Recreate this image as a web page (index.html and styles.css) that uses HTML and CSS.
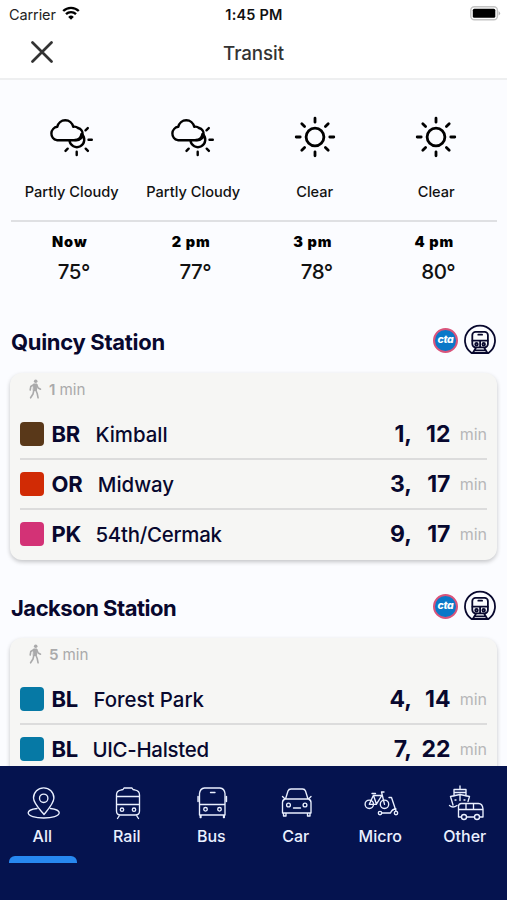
FILE: index.html
```html
<!DOCTYPE html>
<html lang="en">
<head>
<meta charset="utf-8">
<title>Transit</title>
<link rel="stylesheet" href="styles.css">
</head>
<body>
<svg class="defs" aria-hidden="true">
  <symbol id="partly" viewBox="0 0 44 40">
    <path d="M7.800 23.200H27.500a6.200 6.200 0 0 0 1.500-12.200a5.500 5.500 0 0 0-4.800-1.200a8.100 8.100 0 0 0-15.900 0A6.800 6.800 0 0 0 7.800 23.200z"/>
    <path d="M20.500 23.500a7.400 7.400 0 1 0 12-6.500M26 23q5.500 0 6.500-6M36.500 13.300l2.300-2.200M39.500 22.700h3.300M36.700 31.700l2.200 2.200M27.700 34.800v3.200M18.700 31.700l-2.200 2.200"/>
  </symbol>
  <symbol id="sun" viewBox="0 0 44 44">
    <circle cx="22" cy="22" r="8.900"/>
    <path d="M22 3.200v4M22 36.800v4M3.200 22h4M36.800 22h4M8.800 8.800l2.800 2.800M32.400 32.400l2.800 2.800M35.200 8.800l-2.800 2.800M11.600 32.400l-2.800 2.800"/>
  </symbol>
  <symbol id="walk" viewBox="0 0 14 20">
    <circle cx="7.700" cy="2.200" r="1.800" fill="currentColor" stroke="none"/>
    <path d="M6 5h3l-.5 6.500h-3z" fill="currentColor" stroke-width="1"/>
    <path d="M6 5.500L2.800 7.500 2.200 11M8.800 6l1.400 3 2.300 1.200M5.800 11.500L5 15l-2.400 3.800M8 11.500l1.200 3 .9 4.300"/>
  </symbol>
  <symbol id="train" viewBox="0 0 32 32">
    <path d="M7.500 29A15 15 0 1 1 24.500 29z"/>
    <rect x="8.300" y="7.800" width="15.600" height="15.600" rx="3.300"/>
    <path d="M8.500 16.700h15.200M14.300 10.700h3.800M16.100 17v6M11.800 24l-2.700 4.500M20.400 24l2.700 4.500M10.500 26.300h11"/>
    <circle cx="12.500" cy="20.200" r="1.300"/><circle cx="19.700" cy="20.200" r="1.300"/>
  </symbol>
</svg>
<div class="status">
  <span class="carrier">Carrier</span>
  <svg class="wifi" viewBox="0 0 18 14"><path d="M1.200 5a11.200 11.200 0 0 1 15.600 0M4 8.100a7.200 7.200 0 0 1 10 0"/><path class="dot" d="M9 13.700L6.200 10.900a4 4 0 0 1 5.600 0z"/></svg>
  <span class="clock">1:45 PM</span>
  <svg class="battery" viewBox="0 0 31 15"><rect x=".8" y=".8" width="26.600" height="13" rx="3.500" fill="#fff" stroke="#c4c4c4" stroke-width="1.400"/><rect x="2.800" y="2.800" width="22.500" height="9" rx="1.500"/><path d="M28.600 5q3 2.300 0 4.600z" fill="#b5b5b5"/></svg>
</div>
<header class="bar">
  <svg class="close" viewBox="0 0 22 22"><path d="M1.500 1.500L20.500 20.500M20.500 1.500L1.500 20.500"/></svg>
  <h1>Transit</h1>
</header>
<main>
  <section class="weather">
    <div class="sky">
      <div><svg class="wi cloud"><use href="#partly"/></svg><span>Partly Cloudy</span></div>
      <div><svg class="wi cloud"><use href="#partly"/></svg><span>Partly Cloudy</span></div>
      <div><svg class="wi"><use href="#sun"/></svg><span>Clear</span></div>
      <div><svg class="wi"><use href="#sun"/></svg><span>Clear</span></div>
    </div>
    <div class="hours">
      <div><b>Now</b><span>75°</span></div>
      <div><b>2 pm</b><span>77°</span></div>
      <div><b>3 pm</b><span>78°</span></div>
      <div><b>4 pm</b><span>80°</span></div>
    </div>
  </section>
  <section class="station">
    <div class="head"><h2>Quincy Station</h2><span class="cta">cta</span><svg class="train"><use href="#train"/></svg></div>
    <div class="card">
      <div class="walk"><svg><use href="#walk"/></svg><b>1</b><span>min</span></div>
      <div class="row"><i class="sw brown"></i><b class="code">BR</b><span class="dest">Kimball</span><b class="time first">1,</b><b class="time">12</b><span class="min">min</span></div>
      <div class="row"><i class="sw orange"></i><b class="code">OR</b><span class="dest">Midway</span><b class="time first">3,</b><b class="time">17</b><span class="min">min</span></div>
      <div class="row"><i class="sw pink"></i><b class="code">PK</b><span class="dest long">54th/Cermak</span><b class="time first">9,</b><b class="time">17</b><span class="min">min</span></div>
    </div>
  </section>
  <section class="station">
    <div class="head"><h2 class="narrow">Jackson Station</h2><span class="cta">cta</span><svg class="train"><use href="#train"/></svg></div>
    <div class="card">
      <div class="walk"><svg><use href="#walk"/></svg><b>5</b><span>min</span></div>
      <div class="row"><i class="sw blue"></i><b class="code">BL</b><span class="dest">Forest Park</span><b class="time first">4,</b><b class="time">14</b><span class="min">min</span></div>
      <div class="row"><i class="sw blue"></i><b class="code">BL</b><span class="dest long">UIC-Halsted</span><b class="time first">7,</b><b class="time">22</b><span class="min">min</span></div>
    </div>
  </section>
</main>
<nav>
  <a class="on"><svg viewBox="0 0 36 36"><path d="M19 28.500C14 22.500 8.500 17 8.500 12a10.200 10.200 0 0 1 20.400 0c0 5-5 10.500-9.900 16.500z"/><circle cx="18.700" cy="12.300" r="4.200"/><path d="M12 22.500c-5 .6-8.800 1.800-8.800 4.300 0 3.200 7 5.200 15.500 5.200s15.500-2 15.500-5.200c0-2.500-3.800-3.700-8.800-4.300"/></svg><span>All</span></a>
  <a><svg viewBox="0 0 36 36"><path d="M7.500 9q0-4 4-4.800l2.500-.7 1-1.500h8l1 1.500 2.500.7q4 .8 4 4.800v16q0 4-4 4h-15q-4 0-4-4zM7.500 10.500h23M7.500 18.500h23M10.500 29.500l-2 3M27.500 29.500l2 3"/><circle cx="13" cy="23.700" r="1.700"/><circle cx="25" cy="23.700" r="1.700"/></svg><span>Rail</span></a>
  <a><svg viewBox="0 0 36 36"><path d="M5.500 29V7.500q.5-5 5-5.500h15.500q4.500.5 5 5.500V29zM5.500 18.500h25.500M16.500 6.500h4.500M4 10.500v5M32.500 10.500v5M7 29v2.500M29.500 29v2.500M6.200 29v2.500M30.300 29v2.500"/><circle cx="11.500" cy="23.300" r="1.800"/><circle cx="25.500" cy="23.300" r="1.800"/></svg><span>Bus</span></a>
  <a><svg viewBox="0 0 36 36"><path d="M7.500 13L10 5q.7-2 3-2h11.500q2.300 0 3 2L30 13M4.500 10.500l2.500 2.500h23.500l2.500-2.500M7 13q-2.500 1-2.500 3.500V27h28.500V16.500q0-2.500-2.500-3.500M5.500 27v3h2.500v-3M29.500 27v3h2.500v-3M15.500 22h7"/><circle cx="10.500" cy="19" r="1.900"/><circle cx="27" cy="19" r="1.900"/></svg><span>Car</span></a>
  <a><svg viewBox="0 0 36 36"><circle cx="6.300" cy="18.300" r="4.200"/><circle cx="21.500" cy="18.300" r="4.200"/><path d="M6.300 18.300l4-8.800h8.500l-5.500 8.800zM9 7.500h3.500M10.500 9.500l3 8.800M21.500 18.300l-3-12.300h2.500M26 11.500h2.500l4.500 13.500M18.500 27h9q1.500-4 5.500-4"/><circle cx="17" cy="27" r="1.700"/><circle cx="33" cy="27" r="1.700"/></svg><span>Micro</span></a>
  <a><svg viewBox="0 0 36 36"><path d="M13 0v3.500M7 3.500h12v6.500M7 3.500v6.500M7 6.500h12M3.500 10.500l9.500-2 9.500 2-1.500 5M3.500 10.500l2.500 8.500M13 8.500v6M8 14h1M17 14h1M2.500 19.500c2 1.800 5 1.800 7.500 0"/><path d="M11.500 31V20.500q0-3 3-3h17q4 0 4.500 5.500V31zM11.500 23.500H36M19 17.500v6M26.500 17.500v6"/><circle cx="17" cy="31" r="2.500" fill="#05134f"/><circle cx="30" cy="31" r="2.500" fill="#05134f"/></svg><span>Other</span></a>
</nav>
</body>
</html>
```

FILE: styles.css
```css
* { box-sizing: border-box; }
body { margin: 0; width: 507px; height: 900px; overflow: hidden; display: flex; flex-direction: column; background: #fbfcff; color: #08082e; font-family: Inter, "Liberation Sans", sans-serif; }
.defs { position: absolute; width: 0; height: 0; }
h1, h2 { margin: 0; }
svg { display: block; flex: none; fill: none; stroke: currentColor; stroke-linecap: round; stroke-linejoin: round; }

.status { flex: none; height: 28px; display: grid; grid-template-columns: 52px 138px 110px 1fr; align-items: center; padding: 0 5px 0 9px; background: #fff; color: #222; }
.carrier { font-size: 14.5px; letter-spacing: -.1px; }
.wifi { width: 18px; height: 14px; margin: -3px 0 0 1px; stroke: #000; stroke-width: 2.4; stroke-linecap: butt; }
.wifi .dot { fill: #000; stroke: none; }
.clock { font-size: 14.5px; font-weight: 600; text-align: center; letter-spacing: .2px; color: #111; }
.battery { width: 31px; height: 15px; margin: -2px 1px 0 0; justify-self: end; fill: #000; stroke: none; }

.bar { flex: none; height: 52px; display: grid; grid-template-columns: 54px 1fr 54px; align-items: center; background: #fff; border-bottom: 2px solid #eeeff0; color: #333; }
.close { width: 22px; height: 22px; margin: -2px 0 0 31px; stroke-width: 2.7; }
h1 { font-size: 18.800px; font-weight: 500; text-align: center; letter-spacing: -.1px; }

main { flex: none; height: 686px; overflow: hidden; }
.weather { margin: 0 10px 0 11px; color: #111; }
.sky, .hours { display: grid; grid-template-columns: repeat(4, 121.5px); }
.sky { height: 142px; border-bottom: 2px solid #dfe0e3; }
.sky > div { display: flex; flex-direction: column; align-items: center; padding-top: 35px; }
.wi { width: 44px; height: 44px; stroke: #000; stroke-width: 2.8; }
.wi.cloud { height: 40px; margin: 2px 2px 2px 0; stroke-width: 2.4; }
.sky span { margin-top: 23px; font-size: 14.6px; line-height: 20px; font-weight: 450; }
.hours > div { display: flex; flex-direction: column; align-items: center; }
.hours b { margin: 10px 4px 0 0; font-size: 14.500px; line-height: 20px; font-weight: 900; letter-spacing: .9px; color: #000; }
.hours span { margin: 8px 0 0 4px; font-size: 20.500px; line-height: 24px; font-weight: 450; letter-spacing: -.5px; }

.station { margin: 0 10px; }
.weather + .station { margin-top: 38px; }
.station + .station { margin-top: 28px; }
.head { height: 51px; display: flex; align-items: flex-start; }
h2 { flex: 1; margin: 6px 0 0 1px; font-size: 22px; line-height: 28px; font-weight: 650; letter-spacing: -.3px; }
h2.narrow { letter-spacing: -.5px; }
.cta { width: 25px; height: 25px; margin: 6px 6px 0 0; display: flex; justify-content: center; align-items: center; border: 2px solid #d9547b; border-radius: 50%; background: #0b78c8; color: #fff; font-size: 10.500px; font-style: italic; font-weight: 800; line-height: 1; letter-spacing: -.3px; }
.train { width: 32px; height: 32px; margin: 2px 1px 0 0; stroke-width: 1.8; }
.card { height: 187px; padding: 0 10px; border-radius: 12px; background: #f6f6f4; box-shadow: 0 2px 4px rgba(0,0,0,.22); }
.station + .station .head { height: 50px; }
.walk { height: 37px; display: flex; align-items: center; padding: 0 0 5px 8px; color: #aaaaab; font-size: 15.200px; }
.walk svg { width: 14px; height: 20px; margin-right: 7px; stroke-width: 1.6; }
.walk b { margin-right: 4px; font-weight: 600; }
.row { height: 50px; display: flex; align-items: center; border-bottom: 2px solid #dcdcdc; }
.row:last-child { border-color: transparent; }
.sw { width: 24px; height: 24px; border-radius: 4px; margin: 0 7px 1px 0; }
.brown { background: #593819; } .orange { background: #d12b05; } .pink { background: #d33276; } .blue { background: #0679a5; }
.code { margin-left: .5px; font-size: 22px; font-weight: 700; letter-spacing: -.3px; }
.dest { flex: 1; margin-left: 15.5px; font-size: 20.400px; font-weight: 450; }
.dest.long { margin-left: 14.5px; letter-spacing: -.25px; }
.time { width: 46.5px; font-size: 23px; line-height: 26px; font-weight: 750; text-align: right; margin-top: -1px; }
.time.first { width: auto; margin-right: -8px; }
.min { width: 36.5px; font-size: 16px; text-align: right; color: #b7b7b8; }

nav { flex: none; height: 134px; display: grid; grid-template-columns: repeat(6, 1fr); background: #05134f; color: #eaf0ff; }
nav a { display: flex; flex-direction: column; align-items: center; height: 97px; padding-top: 20px; }
nav svg { width: 36px; height: 36px; margin-left: 1px; stroke-width: 1.35; overflow: visible; }
nav span { margin: 4px 0 0; font-size: 16px; line-height: 20px; font-weight: 500; }
nav .on::after { content: ""; width: 68px; height: 7px; margin: 10px 0 0 2px; border-radius: 6px 6px 0 0; background: #2788f0; }
```
